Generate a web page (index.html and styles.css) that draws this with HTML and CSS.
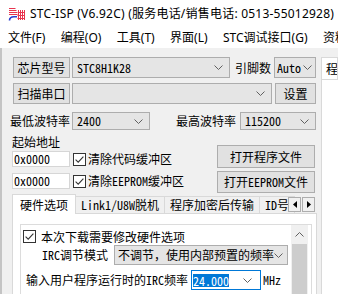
FILE: index.html
```html
<!DOCTYPE html>
<html lang="zh">
<head>
<meta charset="utf-8">
<link rel="stylesheet" href="styles.css">
</head>
<body>
<div class="titlebar">
  <svg class="logo" width="17" height="14" viewBox="0 0 17 14">
    <g fill="none" stroke="#e8344e" stroke-width="1">
      <path d="M1 1.5h6.5M1 3.5h7.5M1 5.5h8M1 7.5h8.5"/>
      <path d="M10.5 3v10M12.5 3v10M14.5 3v10M16.5 3v10M9.5 5.5h7M9.5 8.5h7M9.5 11.5h7"/>
    </g>
    <path d="M1.5 13.5C1.5 11 3.5 9.8 6 9.8h3" fill="none" stroke="#2a3fd0" stroke-width="1.6"/>
  </svg>
  <span class="title">STC-ISP (V6.92C) (服务电话/销售电话: 0513-55012928)</span>
</div>
<div class="menubar">
  <span>文件(F)</span><span>编程(O)</span><span>工具(T)</span><span>界面(L)</span><span>STC调试接口(G)</span><span class="clip">资料</span>
</div>
<div class="main">
  <div class="left">
    <div class="row r1">
      <div class="btn b-chip">芯片型号</div>
      <div class="combo c-chip"><span>STC8H1K28</span><svg class="chev" width="9" height="5" viewBox="0 0 9 5"><polyline points="0.5,0.5 4.5,4.5 8.5,0.5"/></svg></div>
      <span class="lbl l-pin">引脚数</span>
      <div class="combo c-auto"><span>Auto</span><svg class="chev" width="9" height="5" viewBox="0 0 9 5"><polyline points="0.5,0.5 4.5,4.5 8.5,0.5"/></svg></div>
    </div>
    <div class="row r2">
      <div class="btn b-chip">扫描串口</div>
      <div class="combo c-port"><span></span><svg class="chev" width="9" height="5" viewBox="0 0 9 5"><polyline points="0.5,0.5 4.5,4.5 8.5,0.5"/></svg></div>
      <div class="btn b-set">设置</div>
    </div>
    <div class="row r3">
      <span class="lbl l-min">最低波特率</span>
      <div class="combo c-min"><span>2400</span><svg class="chev" width="9" height="5" viewBox="0 0 9 5"><polyline points="0.5,0.5 4.5,4.5 8.5,0.5"/></svg></div>
      <span class="lbl l-max">最高波特率</span>
      <div class="combo c-max"><span>115200</span><svg class="chev" width="9" height="5" viewBox="0 0 9 5"><polyline points="0.5,0.5 4.5,4.5 8.5,0.5"/></svg></div>
    </div>
    <div class="addr">
      <div class="addr-left">
        <div class="lbl l-addr">起始地址</div>
        <div class="arow">
          <div class="edit">0x0000</div>
          <svg class="cb" width="13" height="13" viewBox="0 0 13 13"><rect x="0.5" y="0.5" width="12" height="12" fill="#fff" stroke="#333"/><path d="M2.6 6.6l2.6 2.6 5.2-5.6" fill="none" stroke="#333" stroke-width="1.1"/></svg>
          <span class="cbt">清除代码缓冲区</span>
        </div>
        <div class="arow a2">
          <div class="edit">0x0000</div>
          <svg class="cb" width="13" height="13" viewBox="0 0 13 13"><rect x="0.5" y="0.5" width="12" height="12" fill="#fff" stroke="#333"/><path d="M2.6 6.6l2.6 2.6 5.2-5.6" fill="none" stroke="#333" stroke-width="1.1"/></svg>
          <span class="cbt">清除EEPROM缓冲区</span>
        </div>
      </div>
      <div class="addr-right">
        <div class="btn b-open">打开程序文件</div>
        <div class="btn b-open2">打开EEPROM文件</div>
      </div>
    </div>
    <div class="tabs">
      <div class="tab sel">硬件选项</div>
      <div class="tab">Link1/U8W脱机</div>
      <div class="tab">程序加密后传输</div>
      <div class="tab">ID号</div>
      <div class="spin">
        <div class="sb"><svg width="4" height="7" viewBox="0 0 4 7"><path d="M4 0v7L0 3.5z" fill="#000"/></svg></div>
        <div class="sb"><svg width="4" height="7" viewBox="0 0 4 7"><path d="M0 0v7l4-3.5z" fill="#000"/></svg></div>
      </div>
    </div>
    <div class="panel">
      <div class="group">
        <div class="gcontent">
          <div class="grow g1">
            <svg class="cb" width="13" height="13" viewBox="0 0 13 13"><rect x="0.5" y="0.5" width="12" height="12" fill="#fff" stroke="#333"/><path d="M2.6 6.6l2.6 2.6 5.2-5.6" fill="none" stroke="#333" stroke-width="1.1"/></svg>
            <span class="g1t">本次下载需要修改硬件选项</span>
          </div>
          <div class="grow g2">
            <span class="lbl l-irc">IRC调节模式</span>
            <div class="combo c-irc"><span>不调节，使用内部预置的频率</span><svg class="chev" width="9" height="5" viewBox="0 0 9 5"><polyline points="0.5,0.5 4.5,4.5 8.5,0.5"/></svg></div>
          </div>
          <div class="grow g3">
            <span class="lbl l-freq">输入用户程序运行时的IRC频率</span>
            <div class="fedit"><span class="selt">24.000</span><svg class="chev" width="9" height="5" viewBox="0 0 9 5"><polyline points="0.5,0.5 4.5,4.5 8.5,0.5"/></svg></div>
            <span class="mhz">MHz</span>
          </div>
        </div>
        <div class="vscroll">
          <div class="vup"><svg width="9" height="5" viewBox="0 0 9 5"><polyline points="0.5,4.5 4.5,0.5 8.5,4.5"/></svg></div>
          <div class="vthumb"></div>
        </div>
      </div>
    </div>
  </div>
  <div class="right">
    <div class="rtab"><span>程</span></div>
    <div class="rpanel"></div>
  </div>
</div>
</body>
</html>
```
FILE: styles.css
```css
html, body { margin: 0; padding: 0; }
body {
  width: 338px; height: 294px; overflow: hidden;
  background: #f0f0f0; color: #000;
  font-family: "Noto Sans Mono CJK SC", "Noto Sans CJK SC", monospace;
  font-size: 12px; line-height: 14px;
}
.titlebar {
  height: 28px; background: #fff; display: flex; align-items: center;
  padding-left: 8px; box-sizing: border-box;
}
.logo { margin-right: 5px; margin-top: -1px; flex: none; }
.title, .menubar {
  font-family: "Noto Sans", "Noto Sans CJK SC", sans-serif; font-size: 12px;
  white-space: nowrap;
}
.title { letter-spacing: 0.22px; }
.menubar {
  height: 20px; background: #fff; display: flex; align-items: center;
  gap: 15.4px; padding-left: 8px; box-sizing: border-box; overflow: hidden;
}
.menubar .clip { width: 16px; overflow: hidden; flex: none; }
.main { display: flex; height: 246px; overflow: hidden; }
.left {
  width: 321px; box-sizing: border-box; flex: none;
  border-left: 2px solid #c4c4c4;
  padding: 9px 5px 0 10px;
}
.row { display: flex; align-items: center; }
.r1, .r2 { height: 21px; }
.r2 { margin-top: 5px; }
.r3 { height: 18px; margin-top: 8px; }
.btn {
  background: #e1e1e1; border: 1px solid #adadad; box-sizing: border-box;
  display: flex; align-items: center; justify-content: center; white-space: nowrap;
}
.combo {
  background: #e5e5e5; border: 1px solid #adadad; box-sizing: border-box;
  display: flex; align-items: center; justify-content: space-between;
  padding: 0 6px 0 4px; height: 100%; white-space: nowrap; overflow: hidden;
}
.chev { flex: none; }
.chev polyline, .vup polyline { fill: none; stroke: #606060; stroke-width: 1; }
.b-chip { width: 57px; height: 21px; margin-left: 1px; }
.c-chip { width: 158px; margin-left: 2px; }
.l-pin { margin-left: 5px; }
.c-auto { width: 42px; margin-left: 3px; padding: 0 3px 0 2px; }
.c-port { width: 200px; margin-left: 2px; }
.b-set { width: 41px; height: 21px; margin-left: 3px; }
.l-min { margin-left: -2px; }
.c-min { width: 78px; margin-left: 2px; }
.l-max { margin-left: 26px; }
.c-max { width: 76px; margin-left: 4px; }
.lbl { white-space: nowrap; }

.addr { display: flex; margin-top: 5px; }
.addr-left { width: 190px; }
.l-addr { height: 14px; }
.arow { display: flex; align-items: center; height: 16px; margin-top: 2px; }
.arow.a2 { margin-top: 6px; }
.edit {
  width: 58px; height: 16px; box-sizing: border-box; background: #fff;
  border: 1px solid #d6d6d6; padding-left: 1px; line-height: 14px;
}
.cb { flex: none; margin-left: 3px; }
.cbt { margin-left: 2px; white-space: nowrap; }
.addr-right { margin-left: 15px; padding-top: 10px; display: flex; flex-direction: column; }
.b-open { width: 98px; height: 23px; }
.b-open2 { width: 98px; height: 22px; margin-top: 3px; }

.tabs { display: flex; align-items: flex-end; height: 19px; margin-top: 1px; position: relative; z-index: 1; }
.tab {
  height: 17px; box-sizing: border-box; padding: 0 5px; white-space: nowrap;
  border: 1px solid #d9d9d9; border-bottom: none; margin-left: -1px;
  background: #f0f0f0; display: flex; align-items: center;
}
.tab.sel {
  height: 20px; margin-left: 0; background: #fff; padding: 0 7px; margin-bottom: -1px;
  position: relative; z-index: 2;
}
.spin {
  position: absolute; left: 276px; top: 3px; display: flex;
}
.sb {
  width: 13px; height: 15px; box-sizing: border-box; background: #f0f0f0;
  border: 1px solid #adadad; display: flex; align-items: center; justify-content: center;
  margin-right: 1px;
}
.panel {
  background: #fff; border: 1px solid #d9d9d9; border-bottom: none; width: 305px; height: 83px;
  box-sizing: border-box; padding: 10px 4px 0 7px; overflow: hidden;
}
.group {
  border: 1px solid #dcdcdc; border-bottom: none; height: 72px; display: flex;
}
.gcontent { flex: 1; }
.grow { display: flex; align-items: center; }
.g1 { height: 13px; margin-top: 5px; }
.g1 .cb { margin-left: 2px; }
.g1t { margin-left: 5px; }
.g2 { height: 20px; margin-top: 2px; }
.l-irc { margin-left: 21px; }
.c-irc { width: 174px; margin-left: 6px; padding: 0 7px 0 3px; }
.g3 { height: 20px; margin-top: 5px; }
.l-freq { margin-left: 5px; }
.fedit {
  width: 70px; height: 20px; box-sizing: border-box; margin-left: 3px;
  border: 1px solid #0078d7; background: #fff; display: flex; align-items: center;
  justify-content: space-between; padding: 0 8px 0 1px;
}
.selt { background: #0078d7; color: #fff; line-height: 13px; }
.mhz { margin-left: 2px; }
.vscroll { width: 17px; margin-right: 3px; display: flex; flex-direction: column; background: #f0f0f0; }
.vup { height: 19px; display: flex; align-items: center; justify-content: center; }
.vthumb { flex: 1; background: #cdcdcd; margin: 0 1px; }

.right { flex: 1; padding-top: 9px; min-width: 0; }
.rtab {
  height: 22px; box-sizing: border-box; border: 1px solid #d9d9d9; border-bottom: none;
  background: #fff; padding-left: 4px; white-space: nowrap; overflow: hidden;
  display: flex; align-items: center;
}
.rpanel { height: 215px; background: #fff; border-left: 1px solid #d9d9d9; border-top: 1px solid #d9d9d9; }
```
